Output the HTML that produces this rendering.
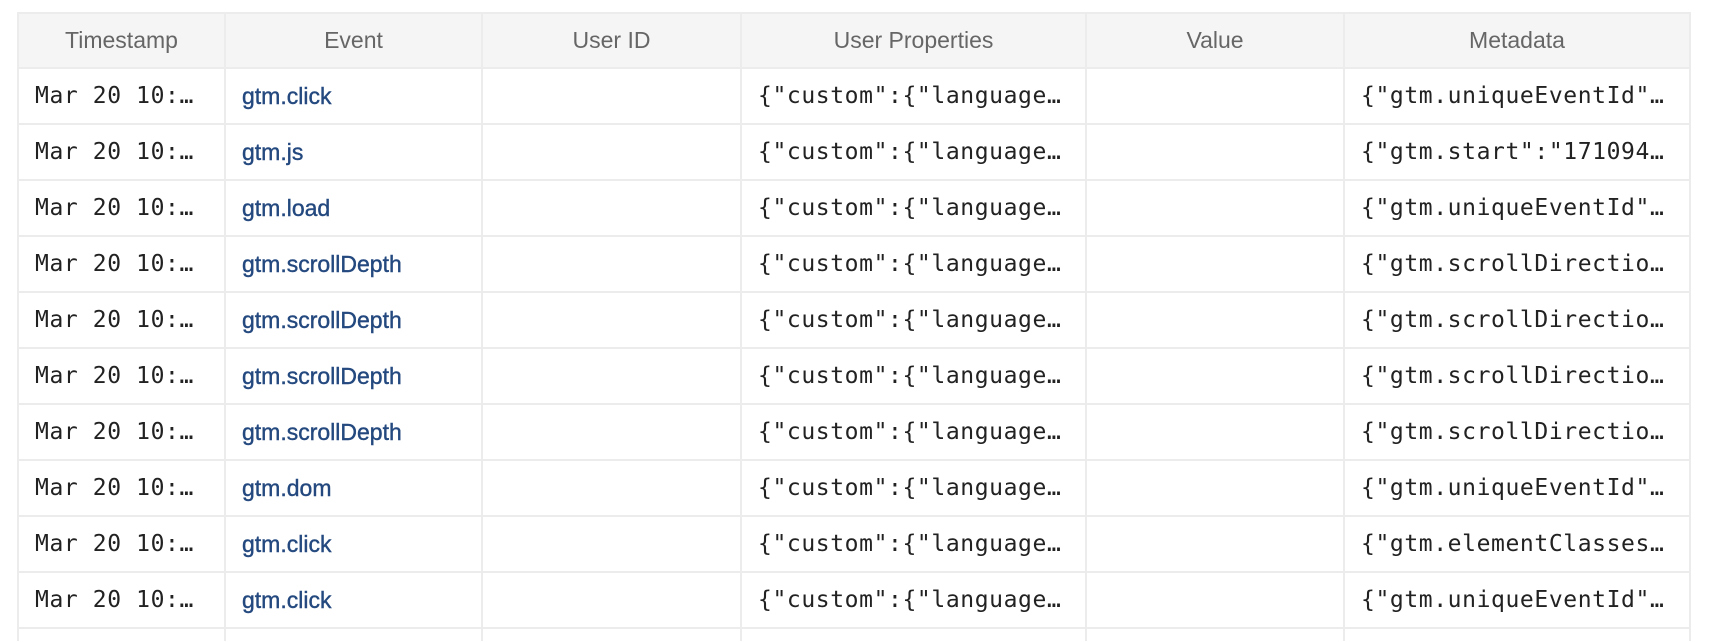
<!DOCTYPE html>
<html style="overflow:hidden;height:642px"><head><meta charset="utf-8"><style>
body{margin:0;background:#fff;width:1714px;height:642px;overflow:hidden;position:relative}
table{position:absolute;left:17px;top:12px;border-collapse:collapse;table-layout:fixed;width:1672px}
td,th{border:2px solid #ececec;white-space:nowrap;overflow:hidden;padding:0 16px}
th{background:#f5f5f5;height:53px;font:23px "Liberation Sans",sans-serif;color:#666;font-weight:normal;text-align:center}
td{height:54px;font:23px "DejaVu Sans Mono",monospace;color:#222;letter-spacing:0.6px}
td.e{font:23px "Liberation Sans",sans-serif;color:#24497f;letter-spacing:0;-webkit-text-stroke:0.4px #24497f}
tr.last td{height:12px;font-size:1px;line-height:1px;border-bottom:none}
</style></head><body>
<table>
<colgroup><col style="width:207px"><col style="width:257px"><col style="width:259px"><col style="width:345px"><col style="width:258px"><col style="width:346px"></colgroup>
<tr><th>Timestamp</th><th>Event</th><th>User ID</th><th>User Properties</th><th>Value</th><th>Metadata</th></tr>
<tr><td>Mar 20 10:…</td><td class="e">gtm.click</td><td></td><td>{"custom":{"language…</td><td></td><td>{"gtm.uniqueEventId"…</td></tr>
<tr><td>Mar 20 10:…</td><td class="e">gtm.js</td><td></td><td>{"custom":{"language…</td><td></td><td>{"gtm.start":"171094…</td></tr>
<tr><td>Mar 20 10:…</td><td class="e">gtm.load</td><td></td><td>{"custom":{"language…</td><td></td><td>{"gtm.uniqueEventId"…</td></tr>
<tr><td>Mar 20 10:…</td><td class="e">gtm.scrollDepth</td><td></td><td>{"custom":{"language…</td><td></td><td>{"gtm.scrollDirectio…</td></tr>
<tr><td>Mar 20 10:…</td><td class="e">gtm.scrollDepth</td><td></td><td>{"custom":{"language…</td><td></td><td>{"gtm.scrollDirectio…</td></tr>
<tr><td>Mar 20 10:…</td><td class="e">gtm.scrollDepth</td><td></td><td>{"custom":{"language…</td><td></td><td>{"gtm.scrollDirectio…</td></tr>
<tr><td>Mar 20 10:…</td><td class="e">gtm.scrollDepth</td><td></td><td>{"custom":{"language…</td><td></td><td>{"gtm.scrollDirectio…</td></tr>
<tr><td>Mar 20 10:…</td><td class="e">gtm.dom</td><td></td><td>{"custom":{"language…</td><td></td><td>{"gtm.uniqueEventId"…</td></tr>
<tr><td>Mar 20 10:…</td><td class="e">gtm.click</td><td></td><td>{"custom":{"language…</td><td></td><td>{"gtm.elementClasses…</td></tr>
<tr><td>Mar 20 10:…</td><td class="e">gtm.click</td><td></td><td>{"custom":{"language…</td><td></td><td>{"gtm.uniqueEventId"…</td></tr>
<tr class="last"><td></td><td></td><td></td><td></td><td></td><td></td></tr>
</table>
</body></html>
